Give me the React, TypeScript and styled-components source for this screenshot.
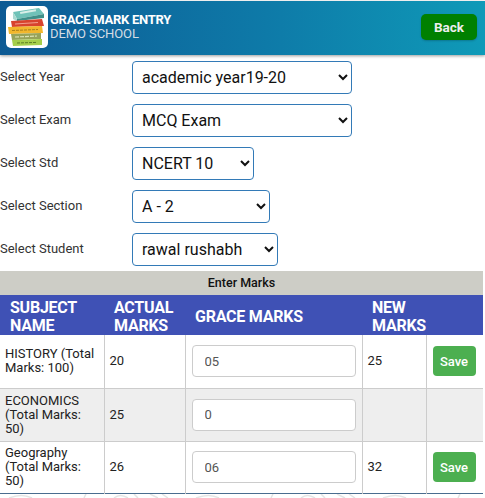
import React from "react";
import styled, { createGlobalStyle } from "styled-components";

type Row = {
  id: string;
  subject: string;
  actual: string;
  grace: string;
  total?: string;
};

const rows: Row[] = [
  { id: "h", subject: "HISTORY (Total Marks: 100)", actual: "20", grace: "05", total: "25" },
  { id: "e", subject: "ECONOMICS (Total Marks: 50)", actual: "25", grace: "0" },
  { id: "g", subject: "Geography (Total Marks: 50)", actual: "26", grace: "06", total: "32" },
];

const filters = [
  { label: "Select Year", value: "academic year19-20", width: 220 },
  { label: "Select Exam", value: "MCQ Exam", width: 220 },
  { label: "Select Std", value: "NCERT 10", width: 122 },
  { label: "Select Section", value: "A - 2", width: 138 },
  { label: "Select Student", value: "rawal rushabh", width: 146 },
];

const GlobalStyle = createGlobalStyle`
  html, body {
    margin: 0;
    padding: 0;
    background: #fff;
    font-family: Roboto, "Liberation Sans", sans-serif;
    overflow: hidden;
  }
  * {
    box-sizing: border-box;
  }
`;

const Page = styled.div`
  width: 485px;
  height: 498px;
  overflow: hidden;
`;

const Header = styled.header`
  height: 54px;
  margin-top: 1px;
  padding: 5px 8px 0 6px;
  display: flex;
  align-items: flex-start;
  background: linear-gradient(90deg, #0d5a94 0%, #0e7aa8 55%, #0f9ab8 100%);
  box-shadow: 0 1px 3px rgba(0, 0, 0, 0.4);
`;

const Logo = styled.div`
  width: 42px;
  height: 42px;
  background: #fff;
  border-radius: 5px;
  flex: none;
`;

const Titles = styled.div`
  margin-left: 2px;
  padding-top: 7px;
  flex: 1;
`;

const Title = styled.div`
  color: #fff;
  font-size: 13px;
  line-height: 14px;
  font-weight: 700;
  letter-spacing: -0.27px;
`;

const School = styled.div`
  color: #d5dde4;
  font-size: 13px;
  line-height: 14px;
  letter-spacing: -0.08px;
`;

const BackButton = styled.button`
  width: 56px;
  height: 26px;
  margin-top: 8px;
  padding: 0;
  border: 0;
  border-radius: 5px;
  background: #008000;
  color: #eee;
  font-family: Roboto, sans-serif;
  font-size: 13.5px;
  font-weight: 700;
  box-shadow: 0 1px 2px rgba(0, 0, 0, 0.2);
`;

const Form = styled.div`
  padding-top: 6px;
  display: flex;
  flex-direction: column;
  gap: 10px;
`;

const FormRow = styled.div`
  display: flex;
  align-items: center;
  height: 33px;
`;

const Label = styled.label`
  width: 132px;
  flex: none;
  padding-bottom: 3px;
  font-size: 13px;
  color: #333;
`;

const Select = styled.select<{ $width: number }>`
  width: ${(p) => p.$width}px;
  height: 33px;
  padding: 0 5px;
  background: #fff;
  border: 1px solid #337ab7;
  border-radius: 4px;
  color: #111;
  font-family: Roboto, sans-serif;
  font-size: 16px;
`;

const Band = styled.div`
  margin-top: 5px;
  height: 24px;
  margin-right: 2px;
  background: #cdcdc6;
  color: #111;
  font-size: 12.5px;
  font-weight: 500;
  line-height: 24px;
  text-align: center;
`;

const Table = styled.table`
  width: 483px;
  table-layout: fixed;
  border-collapse: collapse;
  border-bottom: 1px solid #4a6d8f;
`;

const HeadRow = styled.tr`
  height: 40px;
  background: #3f51b5;
`;

const HeadCell = styled.th`
  padding: 4px 0 0 10px;
  color: #fff;
  font-size: 16px;
  line-height: 18px;
  font-weight: 700;
  text-align: left;
  letter-spacing: -0.24px;
`;

const BodyRow = styled.tr<{ $shaded: boolean }>`
  height: 53px;
  background: ${(p) => (p.$shaded ? "#eeeeee" : "#fff")};
  border-bottom: 1px solid #ccc;

  &:last-child {
    height: 52px;
    border-bottom: 0;
  }
`;

const Cell = styled.td`
  padding: 0 5px;
  border-left: 1px solid #ccc;
  color: #222;
  font-size: 13px;
  line-height: 14px;

  &:first-child {
    border-left: 0;
  }
`;

const MarksInput = styled.input`
  display: block;
  width: 164px;
  height: 32px;
  margin-left: 1px;
  padding: 0 12px;
  background: #fff;
  border: 1px solid #ccc;
  border-radius: 4px;
  color: #555;
  font-family: Roboto, sans-serif;
  font-size: 13px;
`;

const SaveButton = styled.button`
  display: block;
  width: 43px;
  height: 30px;
  margin-left: 1px;
  padding: 0;
  border: 0;
  border-radius: 4px;
  background: #4caf50;
  color: #fff;
  font-family: Roboto, sans-serif;
  font-size: 13px;
  font-weight: 500;
`;

const Watermark = styled.svg`
  display: block;
  width: 485px;
  height: 4px;
`;

const BooksLogo = () => (
  <svg width="42" height="42" viewBox="0 0 42 42" aria-hidden="true">
    <polygon points="7,6 33,2 38,8 11,13" fill="#6fc2b8" />
    <polygon points="11,13 38,8 38,12 11,15" fill="#3f8f88" />
    <polygon points="7,6 11,13 11,15 7,13" fill="#a9d8d0" />
    <rect x="14" y="6" width="16" height="2" fill="#d8efe8" transform="rotate(-10 14 6)" />
    <polygon points="5,15 36,13 38,20 6,21" fill="#d8432e" />
    <path d="M9 18 L32 16.5" stroke="#f2a08e" strokeWidth="1.2" />
    <polygon points="2,21 36,20 37,27 3,28" fill="#f2b72d" />
    <path d="M6 24.5 L32 23.5" stroke="#a97f1a" strokeWidth="1" strokeDasharray="3 1" />
    <polygon points="5,28 35,27 35,33 6,34" fill="#97a35a" />
    <path d="M9 31 L31 30" stroke="#dde3b4" strokeWidth="1.2" strokeDasharray="4 1" />
    <polygon points="6,34 36,33 36,39 7,40" fill="#a6cf4a" />
    <path d="M11 37 L31 36.4" stroke="#5e7f24" strokeWidth="1" strokeDasharray="3 1" />
  </svg>
);

const WatermarkStrip = () => (
  <Watermark viewBox="0 0 485 4" aria-hidden="true">
    <g fill="none" stroke="#e4e4e4" strokeWidth="1.5">
      {[0, 187, 374].map((x) => (
        <g key={x} transform={`translate(${x} 0)`}>
          <path d="M9 4 Q22 -1 32 4" />
          <path d="M84 4 L86 0 M114 4 Q120 -1 128 4 M134 0 L138 4 M150 0 L158 4 M162 0 L168 4" />
        </g>
      ))}
    </g>
  </Watermark>
);

const App = () => (
  <Page>
    <GlobalStyle />
    <Header>
      <Logo>
        <BooksLogo />
      </Logo>
      <Titles>
        <Title>GRACE MARK ENTRY</Title>
        <School>DEMO SCHOOL</School>
      </Titles>
      <BackButton>Back</BackButton>
    </Header>
    <Form>
      {filters.map((f) => (
        <FormRow key={f.label}>
          <Label>{f.label}</Label>
          <Select $width={f.width} defaultValue={f.value}>
            <option>{f.value}</option>
          </Select>
        </FormRow>
      ))}
    </Form>
    <Band>Enter Marks</Band>
    <Table>
      <colgroup>
        <col width="104" />
        <col width="81" />
        <col width="177" />
        <col width="64" />
        <col width="57" />
      </colgroup>
      <thead>
        <HeadRow>
          <HeadCell>SUBJECT NAME</HeadCell>
          <HeadCell>ACTUAL MARKS</HeadCell>
          <HeadCell>GRACE MARKS</HeadCell>
          <HeadCell>NEW MARKS</HeadCell>
          <HeadCell />
        </HeadRow>
      </thead>
      <tbody>
        {rows.map((r, i) => (
          <BodyRow key={r.id} $shaded={i % 2 === 1}>
            <Cell>{r.subject}</Cell>
            <Cell>{r.actual}</Cell>
            <Cell>
              <MarksInput defaultValue={r.grace} />
            </Cell>
            <Cell>{r.total}</Cell>
            <Cell>{r.total && <SaveButton>Save</SaveButton>}</Cell>
          </BodyRow>
        ))}
      </tbody>
    </Table>
    <WatermarkStrip />
  </Page>
);

export default App;
